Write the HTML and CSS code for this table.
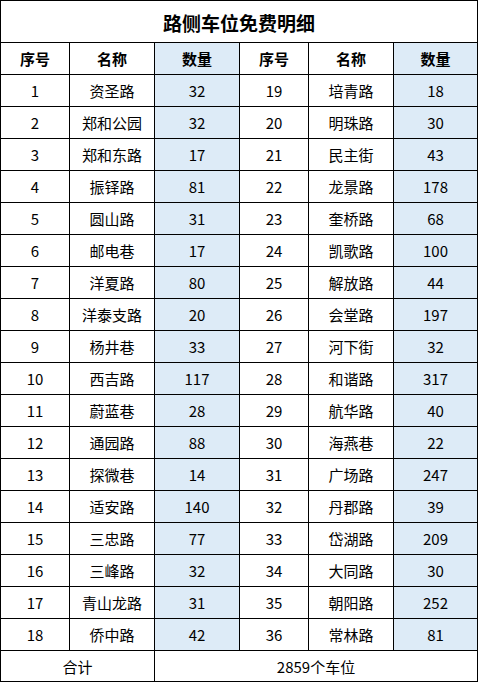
FILE: index.html
```html
<!DOCTYPE html>
<html lang="zh">
<head>
<meta charset="utf-8">
<title>路侧车位免费明细</title>
<link rel="stylesheet" href="styles.css">
</head>
<body>
<div class="sheet">
  <div class="cell title">路侧车位免费明细</div>
  <div class="cell head">序号</div><div class="cell head">名称</div><div class="cell head qty">数量</div>
  <div class="cell head">序号</div><div class="cell head">名称</div><div class="cell head qty">数量</div>

  <div class="cell">1</div><div class="cell">资圣路</div><div class="cell qty">32</div><div class="cell">19</div><div class="cell">培青路</div><div class="cell qty">18</div>
  <div class="cell">2</div><div class="cell">郑和公园</div><div class="cell qty">32</div><div class="cell">20</div><div class="cell">明珠路</div><div class="cell qty">30</div>
  <div class="cell">3</div><div class="cell">郑和东路</div><div class="cell qty">17</div><div class="cell">21</div><div class="cell">民主街</div><div class="cell qty">43</div>
  <div class="cell">4</div><div class="cell">振铎路</div><div class="cell qty">81</div><div class="cell">22</div><div class="cell">龙景路</div><div class="cell qty">178</div>
  <div class="cell">5</div><div class="cell">圆山路</div><div class="cell qty">31</div><div class="cell">23</div><div class="cell">奎桥路</div><div class="cell qty">68</div>
  <div class="cell">6</div><div class="cell">邮电巷</div><div class="cell qty">17</div><div class="cell">24</div><div class="cell">凯歌路</div><div class="cell qty">100</div>
  <div class="cell">7</div><div class="cell">洋夏路</div><div class="cell qty">80</div><div class="cell">25</div><div class="cell">解放路</div><div class="cell qty">44</div>
  <div class="cell">8</div><div class="cell">洋泰支路</div><div class="cell qty">20</div><div class="cell">26</div><div class="cell">会堂路</div><div class="cell qty">197</div>
  <div class="cell">9</div><div class="cell">杨井巷</div><div class="cell qty">33</div><div class="cell">27</div><div class="cell">河下街</div><div class="cell qty">32</div>
  <div class="cell">10</div><div class="cell">西吉路</div><div class="cell qty">117</div><div class="cell">28</div><div class="cell">和谐路</div><div class="cell qty">317</div>
  <div class="cell">11</div><div class="cell">蔚蓝巷</div><div class="cell qty">28</div><div class="cell">29</div><div class="cell">航华路</div><div class="cell qty">40</div>
  <div class="cell">12</div><div class="cell">通园路</div><div class="cell qty">88</div><div class="cell">30</div><div class="cell">海燕巷</div><div class="cell qty">22</div>
  <div class="cell">13</div><div class="cell">探微巷</div><div class="cell qty">14</div><div class="cell">31</div><div class="cell">广场路</div><div class="cell qty">247</div>
  <div class="cell">14</div><div class="cell">适安路</div><div class="cell qty">140</div><div class="cell">32</div><div class="cell">丹郡路</div><div class="cell qty">39</div>
  <div class="cell">15</div><div class="cell">三忠路</div><div class="cell qty">77</div><div class="cell">33</div><div class="cell">岱湖路</div><div class="cell qty">209</div>
  <div class="cell">16</div><div class="cell">三峰路</div><div class="cell qty">32</div><div class="cell">34</div><div class="cell">大同路</div><div class="cell qty">30</div>
  <div class="cell">17</div><div class="cell">青山龙路</div><div class="cell qty">31</div><div class="cell">35</div><div class="cell">朝阳路</div><div class="cell qty">252</div>
  <div class="cell">18</div><div class="cell">侨中路</div><div class="cell qty">42</div><div class="cell">36</div><div class="cell">常林路</div><div class="cell qty">81</div>

  <div class="cell total-label">合计</div>
  <div class="cell total-value">2859个车位</div>
</div>
</body>
</html>
```

FILE: styles.css
```css
html, body {
  margin: 0;
  padding: 0;
  background: #ffffff;
}

body {
  font-family: "Noto Sans CJK SC", "Noto Sans", sans-serif;
  color: #000000;
}

.sheet {
  width: 478px;
  box-sizing: border-box;
  display: grid;
  grid-template-columns: 69px 85px 85px 69px 85px 84px;
  grid-template-rows: 42px repeat(19, 32px) 31px;
  border-right: 1px solid #000;
  border-bottom: 1px solid #000;
}

.cell {
  border-left: 1px solid #000;
  border-top: 1px solid #000;
  display: flex;
  align-items: center;
  justify-content: center;
  font-size: 15px;
  line-height: 1;
  white-space: nowrap;
  box-sizing: border-box;
}

.title {
  grid-column: 1 / -1;
  font-size: 19px;
  font-weight: 700;
  padding-top: 1px;
}

.head {
  font-weight: 700;
}

.qty {
  background: #ddebf7;
}

.total-label {
  grid-column: 1 / 3;
}

.total-value {
  grid-column: 3 / 7;
}
```
